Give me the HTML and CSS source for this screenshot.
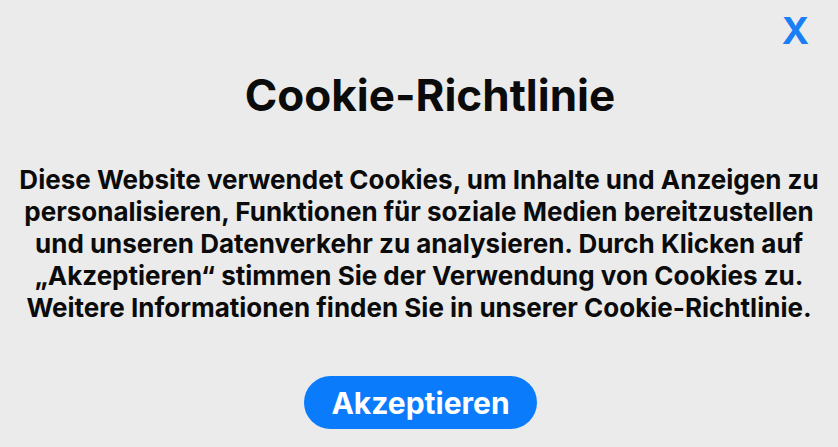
FILE: index.html
```html
<!DOCTYPE html>
<html lang="de">
<head>
<meta charset="utf-8">
<link rel="stylesheet" href="styles.css">
</head>
<body>
<div class="dialog">
  <button class="close" aria-label="Schließen">X</button>
  <h1 class="title">Cookie-Richtlinie</h1>
  <p class="text">Diese Website verwendet Cookies, um Inhalte und Anzeigen zu<br>personalisieren, Funktionen für soziale Medien bereitzustellen<br>und unseren Datenverkehr zu analysieren. Durch Klicken auf<br>„Akzeptieren“ stimmen Sie der Verwendung von Cookies zu.<br>Weitere Informationen finden Sie in unserer Cookie-Richtlinie.</p>
  <button class="accept">Akzeptieren</button>
</div>
</body>
</html>
```
FILE: styles.css
```css
html, body {
  margin: 0;
  padding: 0;
  background: #ebebeb;
}
body {
  font-family: Inter, "Noto Sans", sans-serif;
  color: #0b0b0b;
}
.dialog {
  position: relative;
  width: 838px;
  height: 447px;
  display: flex;
  flex-direction: column;
  align-items: center;
  padding-top: 70px;
  box-sizing: border-box;
}
.close {
  position: absolute;
  top: 9px;
  right: 29px;
  border: none;
  background: none;
  padding: 0;
  font-family: Inter, sans-serif;
  font-weight: 700;
  font-size: 37px;
  line-height: 44px;
  color: #1a7ff5;
}
.title {
  margin: 0 0 0 22px;
  font-size: 44px;
  line-height: 50px;
  font-weight: 700;
}
.text {
  margin: 44px 0 0;
  font-size: 26px;
  line-height: 32px;
  font-weight: 700;
  text-align: center;
}
.accept {
  margin-top: 52px;
  margin-left: 3px;
  width: 233px;
  height: 53px;
  border: none;
  border-radius: 27px;
  background: #0a7cfb;
  color: #fff;
  font-family: Inter, sans-serif;
  font-weight: 700;
  font-size: 30px;
}
```
